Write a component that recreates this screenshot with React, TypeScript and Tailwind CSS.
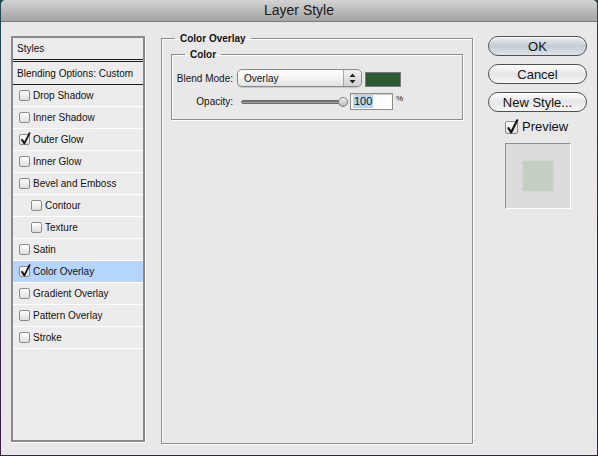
import React from "react";

type Row = { label: string; checked?: boolean; indent?: boolean; selected?: boolean };

const rows: Row[] = [
	{ label: "Drop Shadow" },
	{ label: "Inner Shadow" },
	{ label: "Outer Glow", checked: true },
	{ label: "Inner Glow" },
	{ label: "Bevel and Emboss" },
	{ label: "Contour", indent: true },
	{ label: "Texture", indent: true },
	{ label: "Satin" },
	{ label: "Color Overlay", checked: true, selected: true },
	{ label: "Gradient Overlay" },
	{ label: "Pattern Overlay" },
	{ label: "Stroke" },
];

const CheckMark = ({ size }: { size: number }) => (
	<svg
		className="absolute left-0 -top-[3px]"
		width={size}
		height={size + 2}
		viewBox="0 0 12 14"
		fill="none"
	>
		<path d="M2.2 8.5 L4.8 12.4 L10.4 1.2" stroke="#141414" strokeWidth="2" strokeLinecap="round" strokeLinejoin="round" />
	</svg>
);

const Checkbox = ({ checked, big }: { checked?: boolean; big?: boolean }) => (
	<span
		className={`relative shrink-0 rounded-[2px] border border-[#8b8b8b] bg-gradient-to-b from-white to-[#dedede] ${
			big ? "w-[13px] h-[13px]" : "w-[11px] h-[11px]"
		}`}
	>
		{checked && <CheckMark size={big ? 13 : 11} />}
	</span>
);

const PillButton = ({ label, primary, className = "" }: { label: string; primary?: boolean; className?: string }) => (
	<button
		type="button"
		className={`w-[99px] h-[20px] rounded-full border border-[#4f4f4f] text-[13px] leading-none text-[#111] shadow-[inset_0_1px_0_#fff] ${
			primary
				? "bg-gradient-to-b from-[#e9edf1] via-[#c3ccd5] to-[#dde3e8]"
				: "bg-gradient-to-b from-[#fdfdfd] via-[#e6e6e6] to-[#f6f6f6]"
		} ${className}`}
	>
		{label}
	</button>
);

const StyleList = () => (
	<div className="mt-[14px] w-[134px] h-[406px] shrink-0 border-2 border-[#8a8a8a] bg-[#ececec] shadow-[1px_1px_0_#fff] flex flex-col text-[10px] text-[#111]">
		<div className="h-[21px] flex items-center pl-[4px]">Styles</div>
		<div className="h-[3px] border-y border-[#1c1c1c]" />
		<div className="h-[23px] flex items-center pl-[4px] border-b border-[#1c1c1c]">Blending Options: Custom</div>
		{rows.map((row) => (
			<div
				key={row.label}
				className={`h-[22px] flex items-center gap-[3px] border-b border-white ${
					row.indent ? "pl-[18px]" : "pl-[6px]"
				} ${row.selected ? "bg-[#b6d5fc]" : ""}`}
			>
				<Checkbox checked={row.checked} />
				<span>{row.label}</span>
			</div>
		))}
	</div>
);

const Stepper = () => (
	<svg width="7" height="11" viewBox="0 0 7 11">
		<polygon points="3.5,0.5 6.5,4 0.5,4" fill="#222" />
		<polygon points="0.5,7 6.5,7 3.5,10.5" fill="#222" />
	</svg>
);

const OverlayPanel = () => (
	<fieldset className="ml-[16px] mt-[10px] w-[312px] h-[412px] shrink-0 min-w-0 border border-[#8e8e8e] shadow-[1px_1px_0_#fff,inset_1px_1px_0_#fff]">
		<legend className="ml-[13px] px-[5px] text-[10px] leading-[13px] font-bold text-[#111]">Color Overlay</legend>
		<fieldset className="ml-[9px] mt-[3px] w-[292px] h-[72px] min-w-0 border border-[#8e8e8e] shadow-[1px_1px_0_#fff,inset_1px_1px_0_#fff]">
			<legend className="ml-[13px] px-[5px] text-[10px] leading-[13px] font-bold text-[#111]">Color</legend>
			<div className="mt-[8px] flex items-start text-[10px] text-[#111]">
				<span className="w-[61px] h-[18px] flex items-center justify-end">Blend Mode:</span>
				<div className="ml-[4px] w-[125px] h-[18px] flex rounded-[5px] border border-[#8a8a8a] bg-gradient-to-b from-white via-[#f4f4f4] to-[#e1e1e1] shadow-[0_1px_1px_rgba(0,0,0,0.15)]">
					<span className="flex-1 flex items-center pl-[6px]">Overlay</span>
					<span className="w-[18px] flex items-center justify-center border-l border-[#a6a6a6] rounded-r-[5px] bg-gradient-to-b from-[#f2f2f2] to-[#d2d2d2]">
						<Stepper />
					</span>
				</div>
				<span className="ml-[3px] mt-[3px] w-[36px] h-[15px] border border-[#7a7a7a] bg-[#2f5b33]" />
			</div>
			<div className="mt-[6px] flex items-start text-[10px] text-[#111]">
				<span className="w-[61px] h-[17px] flex items-center justify-end">Opacity:</span>
				<div className="ml-[8px] h-[17px] flex items-center">
					<span className="w-[99px] h-[4px] rounded-full border border-[#6d6d6d] bg-gradient-to-b from-[#5e5e5e] to-[#b4b4b4]" />
					<span className="-ml-[2px] w-[10px] h-[10px] rounded-full border border-[#7b7b7b] bg-gradient-to-b from-[#f4f4f4] to-[#b6b6b6]" />
				</div>
				<div className="ml-[2px] w-[43px] h-[17px] flex items-center border border-[#8c8c8c] bg-white shadow-[inset_0_1px_1px_rgba(0,0,0,0.2)] pl-[2px]">
					<span className="bg-[#b4d5fd] text-[11px] leading-[13px] px-px">100</span>
				</div>
				<span className="ml-[3px] mt-[2px] text-[8px] leading-none">%</span>
			</div>
		</fieldset>
	</fieldset>
);

const SideActions = () => (
	<div className="ml-[15px] mt-[14px] w-[99px] flex flex-col">
		<PillButton label="OK" primary />
		<PillButton label="Cancel" className="mt-[8px]" />
		<PillButton label="New Style..." className="mt-[8px]" />
		<label className="mt-[8px] ml-[17px] h-[14px] flex items-center gap-[4px] text-[13px] text-[#111]">
			<Checkbox checked big />
			<span>Preview</span>
		</label>
		<div className="mt-[9px] ml-[17px] w-[66px] h-[66px] flex items-center justify-center border border-[#8f8f8f] border-r-white border-b-white bg-[#dcdcdc]">
			<span className="w-[32px] h-[32px] border border-[#d2d9d1] bg-[#c5d0c3]" />
		</div>
	</div>
);

export default function App() {
	return (
		<div className="w-[598px] h-[456px] px-px pb-px flex bg-gradient-to-b from-[#1d4a50] via-[#2a2b4d] to-[#3b1d48] font-['Liberation_Sans',Arial,sans-serif]">
			<div className="flex-1 flex flex-col rounded-t-[5px] overflow-hidden bg-[#e8e8e8]">
				<div className="h-[22px] shrink-0 flex items-center justify-center border-b border-[#7b7b7b] bg-gradient-to-b from-[#d3d3d3] to-[#a5a5a5] text-[14px] text-[#1a1a1a]">
					Layer Style
				</div>
				<div className="flex-1 flex items-start pl-[10px]">
					<StyleList />
					<OverlayPanel />
					<SideActions />
				</div>
			</div>
		</div>
	);
}
